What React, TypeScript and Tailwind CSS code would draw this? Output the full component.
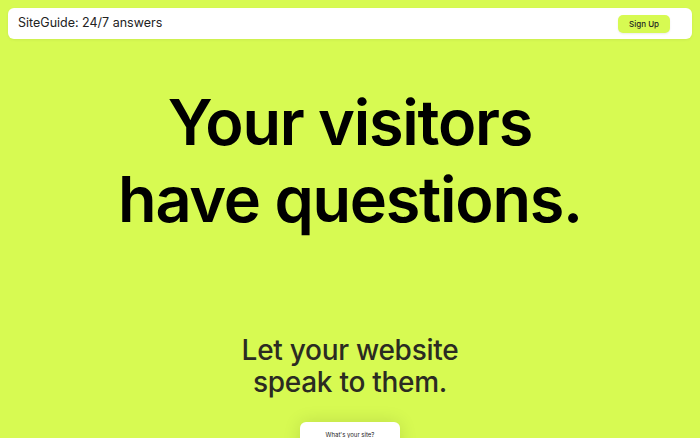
export default function App() {
  return (
    <div
      className="h-screen w-full bg-[#d7fa52] overflow-hidden"
      style={{ fontFamily: 'Inter, "DejaVu Sans", sans-serif' }}
    >
      {/* Top bar */}
      <div className="px-2 pt-2">
        <div className="flex items-center justify-between h-[31px] rounded-md bg-white pl-[10px] pr-[22px] shadow-[0_1px_3px_rgba(0,0,0,0.06)]">
          <span className="text-[12.5px] text-[#222]">SiteGuide: 24/7 answers</span>
          <button className="h-[18px] px-[11px] rounded-[5px] bg-[#d7fa52] text-[8px] font-medium text-[#222] shadow-[0_1px_2px_rgba(0,0,0,0.08)]">
            Sign Up
          </button>
        </div>
      </div>

      {/* Hero */}
      <h1 className="mt-[45px] text-center text-[63px] leading-[77px] font-semibold tracking-[-0.02em] text-black">
        Your visitors
        <br />
        have questions.
      </h1>

      <p className="mt-[96px] text-center text-[28px] leading-[32px] font-medium tracking-[-0.01em] text-[#2b2b22]">
        Let your website
        <br />
        speak to them.
      </p>

      {/* Input card */}
      <div className="mt-[24px] flex justify-center">
        <div className="w-[100px] h-[40px] rounded-t-[6px] bg-white pt-[9px] text-center text-[6px] leading-[8px] text-[#222] shadow-[0_0_18px_rgba(0,0,0,0.12)]">
          What's your site?
        </div>
      </div>
    </div>
  );
}
